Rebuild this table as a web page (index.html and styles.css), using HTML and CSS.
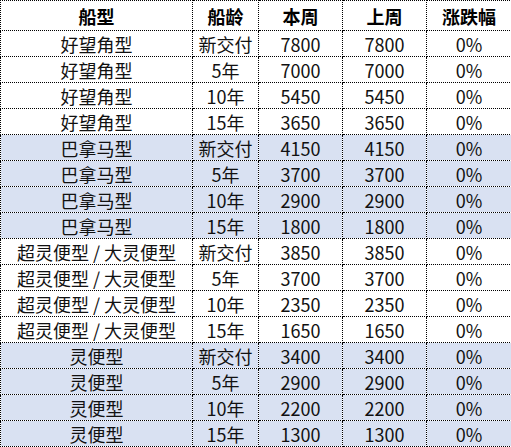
FILE: index.html
```html
<!DOCTYPE html>
<html lang="zh">
<head>
<meta charset="utf-8">
<link rel="stylesheet" href="styles.css">
</head>
<body>
<table class="price-table">
  <colgroup>
    <col class="c-type">
    <col class="c-age">
    <col class="c-num">
    <col class="c-num">
    <col class="c-chg">
  </colgroup>
  <thead>
    <tr><th>船型</th><th>船龄</th><th>本周</th><th>上周</th><th>涨跌幅</th></tr>
  </thead>
  <tbody>
    <tr><td>好望角型</td><td>新交付</td><td>7800</td><td>7800</td><td>0%</td></tr>
    <tr><td>好望角型</td><td>5年</td><td>7000</td><td>7000</td><td>0%</td></tr>
    <tr><td>好望角型</td><td>10年</td><td>5450</td><td>5450</td><td>0%</td></tr>
    <tr><td>好望角型</td><td>15年</td><td>3650</td><td>3650</td><td>0%</td></tr>
    <tr class="blue"><td>巴拿马型</td><td>新交付</td><td>4150</td><td>4150</td><td>0%</td></tr>
    <tr class="blue"><td>巴拿马型</td><td>5年</td><td>3700</td><td>3700</td><td>0%</td></tr>
    <tr class="blue"><td>巴拿马型</td><td>10年</td><td>2900</td><td>2900</td><td>0%</td></tr>
    <tr class="blue"><td>巴拿马型</td><td>15年</td><td>1800</td><td>1800</td><td>0%</td></tr>
    <tr><td>超灵便型 / 大灵便型</td><td>新交付</td><td>3850</td><td>3850</td><td>0%</td></tr>
    <tr><td>超灵便型 / 大灵便型</td><td>5年</td><td>3700</td><td>3700</td><td>0%</td></tr>
    <tr><td>超灵便型 / 大灵便型</td><td>10年</td><td>2350</td><td>2350</td><td>0%</td></tr>
    <tr><td>超灵便型 / 大灵便型</td><td>15年</td><td>1650</td><td>1650</td><td>0%</td></tr>
    <tr class="blue"><td>灵便型</td><td>新交付</td><td>3400</td><td>3400</td><td>0%</td></tr>
    <tr class="blue"><td>灵便型</td><td>5年</td><td>2900</td><td>2900</td><td>0%</td></tr>
    <tr class="blue"><td>灵便型</td><td>10年</td><td>2200</td><td>2200</td><td>0%</td></tr>
    <tr class="blue"><td>灵便型</td><td>15年</td><td>1300</td><td>1300</td><td>0%</td></tr>
  </tbody>
</table>
</body>
</html>
```

FILE: styles.css
```css
html, body {
  margin: 0;
  padding: 0;
  background: #ffffff;
}
.price-table {
  border-collapse: collapse;
  table-layout: fixed;
  width: 511px;
  font-family: "Noto Sans CJK SC", "Noto Sans", sans-serif;
  font-size: 18px;
  color: #111111;
}
.c-type { width: 192px; }
.c-age { width: 66px; }
.c-num { width: 84px; }
.c-chg { width: 85px; }
.price-table th,
.price-table td {
  border: 1px dotted #000000;
  text-align: center;
  vertical-align: middle;
  padding: 0;
  white-space: nowrap;
  overflow: hidden;
  line-height: 1;
}
.price-table th {
  height: 29px;
  font-weight: bold;
  color: #000000;
}
.price-table td {
  height: 25px;
}
.price-table tr.blue td {
  background: #d9e1f2;
}
```
